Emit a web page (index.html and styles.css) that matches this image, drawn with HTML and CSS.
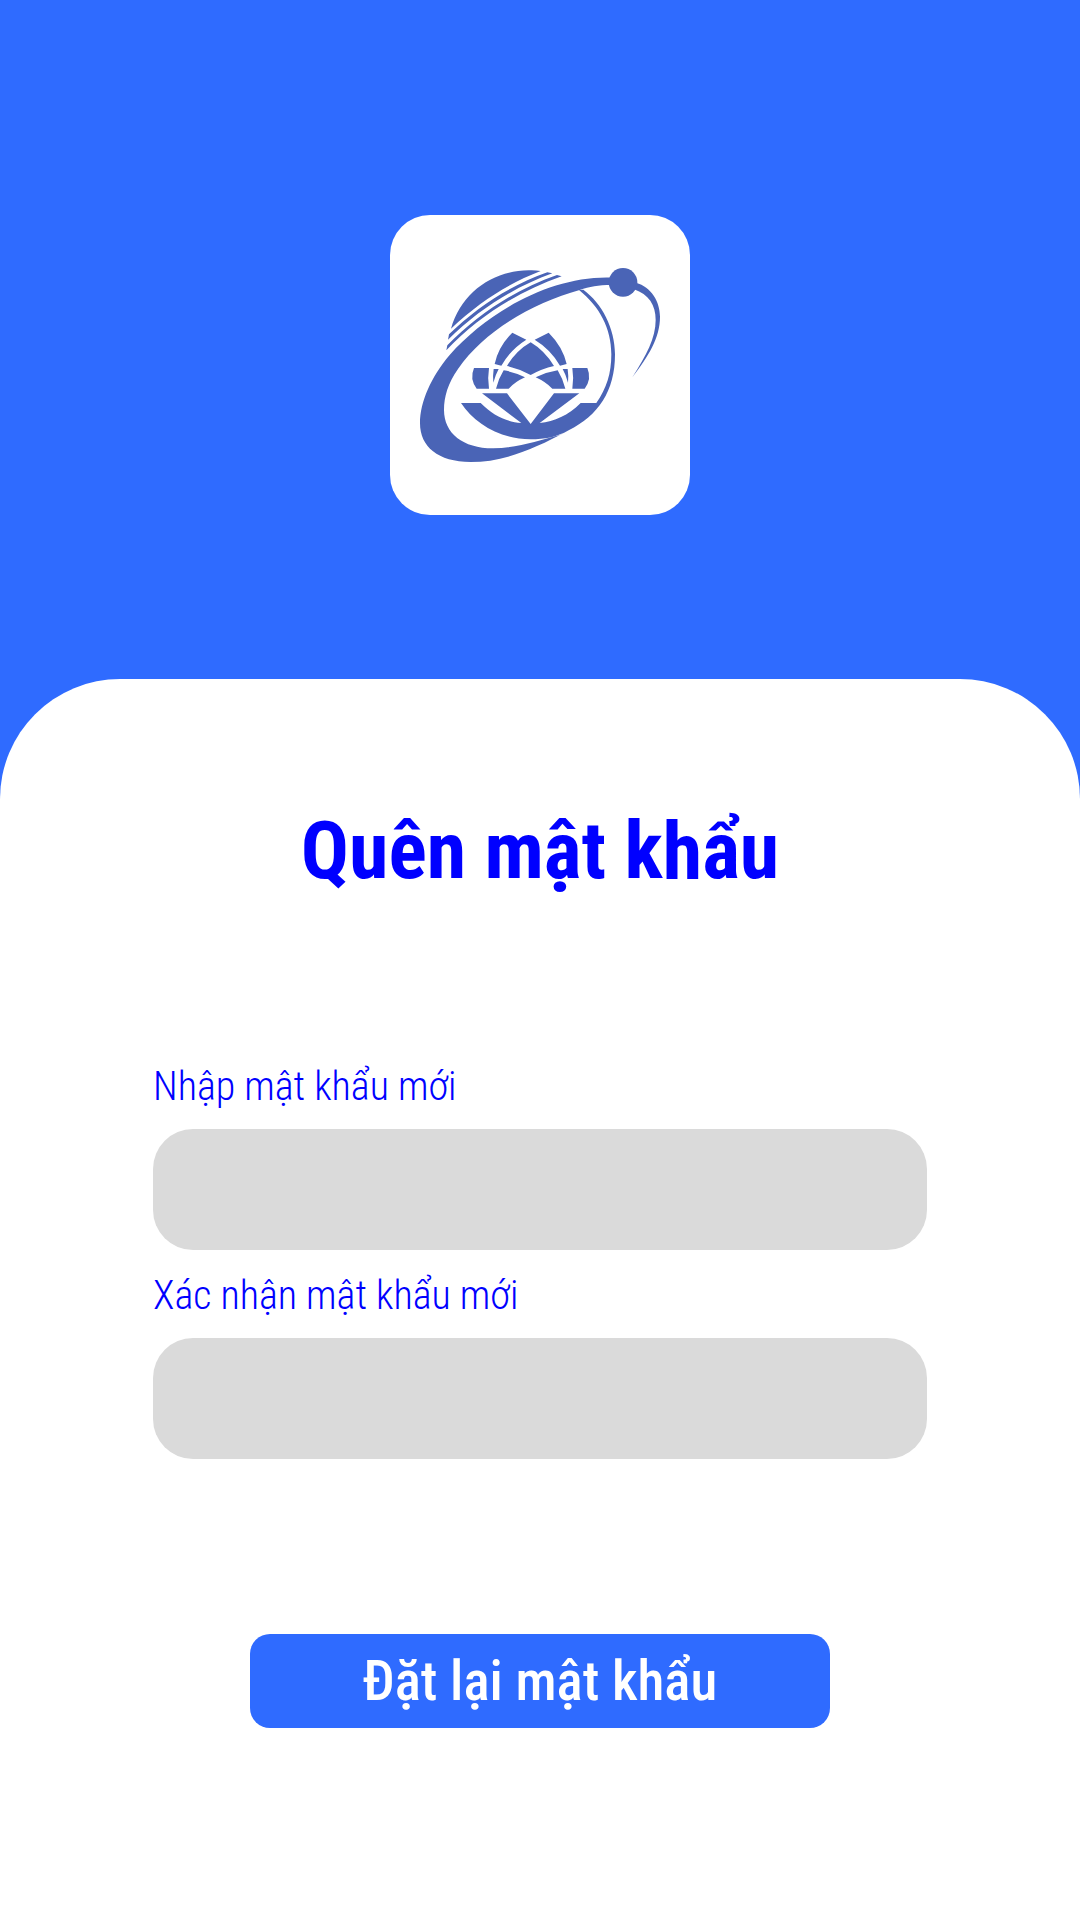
FILE: index.html
```html
<!DOCTYPE html>
<html lang="vi">
<head>
<meta charset="utf-8">
<meta name="viewport" content="width=device-width, initial-scale=1">
<title>Quên mật khẩu</title>
<link rel="stylesheet" href="styles.css">
</head>
<body>
<div class="page">
  <header class="hero">
    <div class="logo">
      <svg class="logo-mark" viewBox="36 30 900 900" role="img" aria-label="Logo">
        <!-- globe cap and stripes -->
        <path d="M219 371C250 262 345 196 452 196Q470 195 488 198C390 236 305 290 219 371Z"/>
        <path d="M210 404L213 388C300 303 400 240 508 202L523 205C415 244 305 310 210 404Z"/>
        <path d="M205 436L208 421C300 328 410 254 537 210L551 214C420 260 300 335 205 436Z"/>
        <!-- orbit -->
        <path d="M700 218C520 212 330 320 215 450C160 515 126 590 126 655C126 725 180 771 278 771C370 771 460 738 572 676L545 690C480 708 420 728 345 730C255 730 198 685 198 615C198 575 210 535 240 492C320 375 470 292 605 255C635 245 660 240 700 240Z"/>
        <path d="M774 233C820 246 846 290 846 335C846 400 810 455 763 517C805 450 833 400 833 345C833 300 812 268 768 253Z"/>
        <circle cx="735" cy="232" r="43"/>
        <!-- globe edge and bowl -->
        <path d="M603 255L616 254C672 295 711 370 711 448C711 560 660 632 572 676C535 697 500 703 458 703C365 703 290 655 249 594H308C345 632 385 650 430 654L312 565H387L458 657L528 565H604L485 654C530 649 570 632 608 594H655C686 550 700 505 700 448C700 370 665 305 603 255Z"/>
        <!-- lotus -->
        <path d="M458 412Q500 437 528 483Q492 491 458 510Q423 491 387 483Q414 437 458 412Z"/>
        <path d="M403 383L445 404Q398 433 370 482L350 477Q361 425 403 383Z"/>
        <path d="M512 383L470 404Q518 433 546 482L566 477Q554 425 512 383Z"/>
        <path d="M288 489H333Q328 520 333 551H296Q274 522 288 489Z"/>
        <path d="M628 489H583Q588 520 583 551H620Q642 522 628 489Z"/>
        <path d="M347 492H362Q352 510 346 533Q344 512 347 492Z"/>
        <path d="M569 492H554Q564 510 570 533Q572 512 569 492Z"/>
        <path d="M377 496Q410 501 441 517Q412 530 392 551H354Q362 520 377 496Z"/>
        <path d="M539 496Q506 501 473 517Q502 530 523 551H562Q554 520 539 496Z"/>
      </svg>
    </div>
  </header>
  <main class="panel">
    <h1 class="title">Quên mật khẩu</h1>
    <form class="form">
      <div class="field">
        <label class="label" for="new-password">Nhập mật khẩu mới</label>
        <input class="input" id="new-password" type="password">
      </div>
      <div class="field">
        <label class="label" for="confirm-password">Xác nhận mật khẩu mới</label>
        <input class="input" id="confirm-password" type="password">
      </div>
      <button class="submit" type="submit">Đặt lại mật khẩu</button>
    </form>
  </main>
</div>
</body>
</html>
```
FILE: styles.css
```css
* {
  box-sizing: border-box;
}

body {
  margin: 0;
  background: #2f6bff;
  font-family: "Roboto Condensed", Roboto, sans-serif;
}

.page {
  display: flex;
  flex-direction: column;
  min-height: 100vh;
}

.hero {
  display: flex;
  justify-content: center;
  padding: 215px 24px 164px;
}

.logo {
  width: 300px;
  height: 300px;
  border-radius: 40px;
  background: #fff;
}

.logo-mark {
  display: block;
  width: 100%;
  fill: #4a64b6;
}

.panel {
  display: flex;
  flex: 1;
  flex-direction: column;
  align-items: center;
  padding: 125px 24px 160px;
  border-radius: 120px 120px 0 0;
  background: #fff;
}

.title {
  margin: 0;
  color: #00f;
  font-size: 80px;
  font-weight: 700;
  line-height: 94px;
}

.form {
  display: flex;
  flex-direction: column;
  align-items: center;
  gap: 22px;
  width: 75%;
  min-width: 300px;
  max-width: 774px;
  margin-top: 165px;
}

.field {
  display: flex;
  flex-direction: column;
  gap: 18px;
  width: 100%;
}

.label {
  color: #00f;
  font-size: 40px;
  font-weight: 300;
  line-height: 48px;
}

.input {
  width: 100%;
  height: 121px;
  padding: 0 40px;
  border: 0;
  border-radius: 40px;
  background: #dadada;
  font: inherit;
  font-size: 40px;
}

.submit {
  width: 75%;
  height: 94px;
  margin-top: 153px;
  border: 0;
  border-radius: 20px;
  background: #2f6bff;
  color: #fff;
  font: inherit;
  font-size: 55px;
  font-weight: 500;
  line-height: 64px;
}
```
